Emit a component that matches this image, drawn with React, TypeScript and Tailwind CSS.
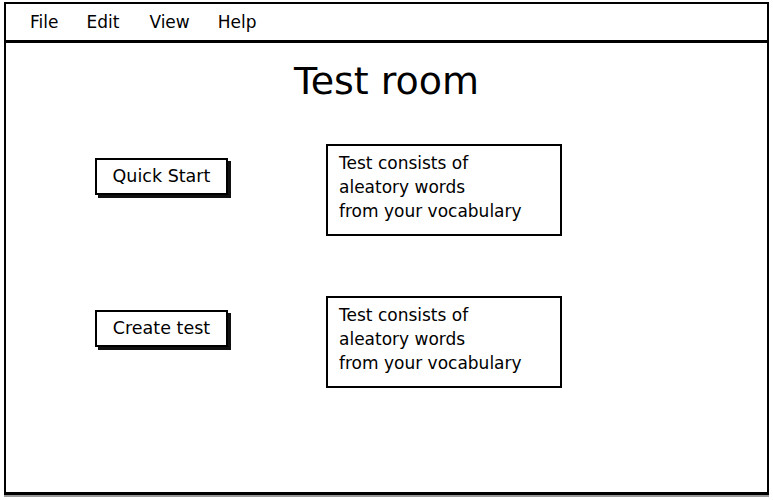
import React from "react";

const font = { fontFamily: '"DejaVu Sans", "Liberation Sans", sans-serif' };

function Row({ label }: { label: string }) {
  return (
    <div className="flex items-start">
      <div className="ml-[89px] mt-[14px] flex h-[37px] w-[133px] items-center justify-center border-2 border-black bg-white text-[17.5px] text-black shadow-[3px_3px_0_#111]">
        {label}
      </div>
      <div className="ml-[98px] h-[92px] w-[236px] border-[2.5px] border-black bg-white pl-[11px] pt-[5px] text-[17px] leading-[24px] text-black">
        <div>Test consists of</div>
        <div>aleatory words</div>
        <div>from your vocabulary</div>
      </div>
    </div>
  );
}

export default function App() {
  return (
    <div className="h-[500px] w-[773px] bg-white" style={font}>
      <div className="ml-[4px] w-[765px] pt-[2px]">
        <div className="flex h-[41px] items-center border-2 border-b-[3px] border-black pl-[24px] pt-[2px] text-[17px] text-black">
          <span>File</span>
          <span className="ml-[28px]">Edit</span>
          <span className="ml-[30px]">View</span>
          <span className="ml-[28px]">Help</span>
        </div>
        <div className="h-[452px] border-x-[2.5px] border-b-[3px] border-black shadow-[0_2px_0_#999]">
          <div className="pt-[14px] text-center text-[38px] leading-[48px] text-black">Test room</div>
          <div className="mt-[39px]">
            <Row label="Quick Start" />
          </div>
          <div className="mt-[60px]">
            <Row label="Create test" />
          </div>
        </div>
      </div>
    </div>
  );
}
